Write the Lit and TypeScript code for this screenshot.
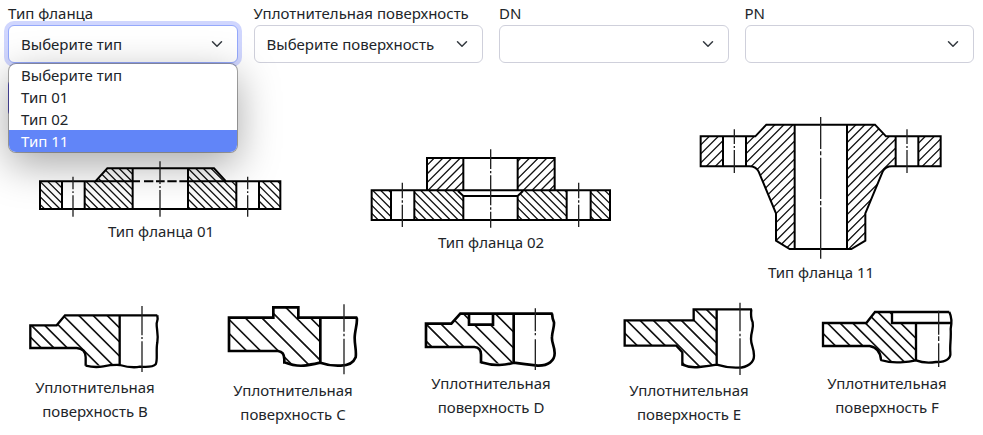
import { LitElement, html, svg, css } from "lit";
import { customElement, property, state } from "lit/decorators.js";
import { classMap } from "lit/directives/class-map.js";

interface Hatch {
  area: string;
  rising?: boolean;
  offsets: number[];
}

interface Drawing {
  id: string;
  title: string;
  box: [number, number, number, number];
  outline: string;
  axis: string;
  weight?: string;
  hatches: Hatch[];
}

const series = (from: number, to: number, step: number): number[] => {
  const out: number[] = [];
  for (let v = from; v <= to; v += step) out.push(v);
  return out;
};

const flanges: Drawing[] = [
  {
    id: "t01",
    title: "Тип фланца 01",
    box: [34, 27, 750, 180],
    outline:
      "M46 94H212L248 55H568L604 94H767V177H46Z M112 94V177 M180 94V177 M324 55V177 M490 55V177 M635 94V177 M703 94V177 M212 94H346 M358 94H386 M394 94H420 M428 94H456 M464 94H604",
    axis: "M145 80V118 M145 124V129 M145 136V200 M406 34V102 M406 108V114 M406 120V200 M669 80V118 M669 124V129 M669 136V200",
    hatches: [
      {
        area: "M46 94H112V177H46Z M180 94H212L248 55H324V177H180Z M490 55H568L604 94H635V177H490Z M703 94H767V177H703Z",
        offsets: series(-688, 140, 23),
      },
    ],
  },
  {
    id: "t02",
    title: "Тип фланца 02",
    box: [20, 9, 750, 246],
    outline:
      "M37 136H752V225H37Z M203 136V39H586V136 M95 136V225 M165 136V225 M312 39V136 M475 39V136 M312 153V225 M475 153V225 M296 138L312 153H475L491 138 M622 136V225 M694 136V225",
    axis: "M129 113V160 M129 166V173 M129 179V246 M394 13V72 M394 78V85 M394 91V181 M394 187V194 M394 200V248 M658 113V160 M658 166V173 M658 179V246",
    hatches: [
      {
        area: "M203 39H312V136H203Z M475 39H586V136H475Z",
        rising: true,
        offsets: series(264, 720, 26),
      },
      {
        area: "M37 136H95V225H37Z M165 136H296L312 153V225H165Z M475 153L491 136H622V225H475Z M694 136H752V225H694Z",
        offsets: series(-600, 180, 24),
      },
    ],
  },
  {
    id: "t11",
    title: "Тип фланца 11",
    box: [20, 36, 750, 429],
    outline:
      "M34 94H198L231 59H557L590 94H754V184H608Q588 184 580 200L528 325V407L486 432H301L260 407V325L208 200Q200 184 180 184H34Z M101 94V184 M170 94V184 M316 59V432 M473 59V432 M619 94V184 M687 94V184",
    axis: "M135 73V117 M135 123V129 M135 135V204 M394 36V132 M394 139V151 M394 158V282 M394 288V301 M394 307V461 M653 73V117 M653 123V129 M653 135V204",
    hatches: [
      {
        area: "M34 94H101V184H34Z M170 94H198L231 59H316V432H301L260 407V325L208 200Q200 184 180 184H170Z M473 59H557L590 94H619V184H608Q588 184 580 200L528 325V407L486 432H473Z M687 94H754V184H687Z",
        rising: true,
        offsets: series(154, 950, 27),
      },
    ],
  },
];

const surfaces: Drawing[] = [
  {
    id: "sb",
    title: "Уплотнительная поверхность B",
    box: [15, 27, 420, 216],
    outline:
      "M412 64H135L110 94H31V162H170Q197 164 197 190V215 M299 64V217 M197 215Q225 222 250 217T299 213Q335 223 360 218C384 220 400 219 407 211C414 200 407 170 412 145C416 120 409 105 410 88Q415 75 412 64",
    axis: "M366 36V124 M366 129V135 M366 142V234",
    weight: "medium",
    hatches: [
      {
        area: "M31 94H110L135 64H299V215H197V190Q197 164 170 162H31Z",
        offsets: [98, 60, 20, -22, -65, -112, -155, -197],
      },
    ],
  },
  {
    id: "sc",
    title: "Уплотнительная поверхность C",
    box: [25, 18, 420, 234],
    outline:
      "M428 71H251V40H176V71H43V171H190Q209 173 209 196V209 M317 71V209 M209 205Q245 219 275 214T317 206Q345 216 375 215C405 216 417 205 423 190C426 170 420 155 420 132C420 110 430 85 426 71",
    axis: "M388 31V113 M388 119V127 M388 134V241",
    weight: "bold",
    hatches: [
      {
        area: "M43 71H176V40H251V71H317V207L275 214L209 207V196Q209 173 190 171H43Z",
        offsets: [75, 33, -20, -70, -118, -173, -216],
      },
    ],
  },
  {
    id: "sd",
    title: "Уплотнительная поверхность D",
    box: [20, 39, 420, 192],
    outline:
      "M415 59H138L111 89H35V159H180Q200 160 200 182V208 M164 59V92H236V59 M298 59V209 M200 205Q230 214 255 213T298 206Q330 211 370 215C402 216 421 200 421 178C421 155 411 147 413 128C414 110 420 100 419 85Q414 74 413 59",
    axis: "M363 43V112 M363 117V124 M363 136V228",
    weight: "bold",
    hatches: [
      {
        area: "M35 89H111L138 59H164V92H236V59H298V209H200V182Q200 160 180 159H35Z",
        offsets: [106, 55, 10, -42, -88, -136, -184],
      },
    ],
  },
  {
    id: "se",
    title: "Уплотнительная поверхность E",
    box: [14, 18, 420, 234],
    outline:
      "M413 46H238V79H31V155H186L204 175V215 M307 46V215 M204 212Q225 222 255 219T307 212Q340 222 370 221C400 222 419 205 419 185C419 160 410 155 410 135C410 110 419 105 415 85Q408 70 411 46",
    axis: "M377 26V112 M377 119V127 M377 133V243",
    weight: "medium",
    hatches: [
      {
        area: "M31 79H238V46H307V213L255 219L204 213V175L186 155H31Z",
        offsets: [86, 42, 2, -38, -80, -122, -160, -196, -230],
      },
    ],
  },
  {
    id: "sf",
    title: "Уплотнительная поверхность F",
    box: [18, 39, 420, 192],
    outline:
      "M415 54H192L166 87H36V156H176Q208 162 210 198 M243 54V87H421 M315 87V202 M208 198Q240 207 268 205T315 199Q340 209 375 204C408 205 420 192 418 175C416 155 421 130 419 105Q425 75 415 54",
    axis: "M383 50V122 M383 127V141 M383 148V219",
    weight: "medium",
    hatches: [
      {
        area: "M36 87H166L192 54H243V87H315V200L268 205L210 198Q208 162 176 156H36Z",
        offsets: [82, 38, 0, -38, -76, -112, -146, -182],
      },
    ],
  },
];

/** Section drawing of a flange with its caption. */
@customElement("section-figure")
export class SectionFigure extends LitElement {
  @property({ attribute: false }) drawing!: Drawing;

  static styles = css`
    :host {
      display: block;
    }
    .figure {
      display: flex;
      flex-direction: column;
      align-items: center;
      margin: 0;
    }
    .art {
      display: block;
      max-width: 100%;
    }
    .caption {
      max-width: 160px;
      line-height: 24px;
      text-align: center;
    }
    .outline,
    .axis,
    .hatch {
      fill: none;
      stroke: #000;
    }
    .outline {
      stroke-width: 6;
    }
    .medium {
      stroke-width: 7;
    }
    .bold {
      stroke-width: 8;
    }
    .axis {
      stroke: #222;
      stroke-width: 4;
    }
    .hatch {
      stroke: #111;
      stroke-width: 4;
    }
    .hatch.medium,
    .hatch.bold {
      stroke-width: 5;
    }
  `;

  private lines(h: Hatch): string {
    return h.offsets
      .map((c) => (h.rising ? `M0 ${c}L800 ${c - 800}` : `M0 ${c}L800 ${c + 800}`))
      .join("");
  }

  render() {
    const d = this.drawing;
    const [, , w, h] = d.box;
    const weight = d.weight ?? "";
    return html`
      <figure class="figure">
        <svg class="art" width=${w / 3} height=${h / 3} viewBox=${d.box.join(" ")} aria-hidden="true">
          ${d.hatches.map(
            (x, i) => svg`
              <clipPath id=${d.id + i}><path d=${x.area}></path></clipPath>
              <g clip-path=${`url(#${d.id + i})`}><path class="hatch ${weight}" d=${this.lines(x)}></path></g>
            `
          )}
          <path class="outline ${weight}" d=${d.outline}></path>
          <path class="axis" d=${d.axis}></path>
        </svg>
        <figcaption class="caption">${d.title}</figcaption>
      </figure>
    `;
  }
}

@customElement("app-root")
export class AppRoot extends LitElement {
  @state() private open = true;
  @state() private active = 3;
  @state() private chosen = 0;

  private types = ["Выберите тип", "Тип 01", "Тип 02", "Тип 11"];

  private fields = [
    { id: "type", label: "Тип фланца", options: this.types },
    { id: "surface", label: "Уплотнительная поверхность", options: ["Выберите поверхность"] },
    { id: "dn", label: "DN", options: [""] },
    { id: "pn", label: "PN", options: [""] },
  ];

  static styles = css`
    :host {
      display: block;
      overflow: hidden;
      padding: 1px 9px 8px 8px;
      background: #fff;
      color: #212529;
      font: 15px/24px "Noto Sans", "Open Sans", sans-serif;
    }
    .fields {
      display: grid;
      grid-template-columns: repeat(4, 1fr);
      gap: 16px;
      margin-bottom: 16px;
    }
    .field {
      position: relative;
      min-width: 0;
    }
    .label {
      display: block;
      white-space: nowrap;
    }
    .control {
      display: grid;
      align-items: center;
    }
    .select {
      grid-area: 1 / 1;
      appearance: none;
      box-sizing: border-box;
      width: 100%;
      height: 38px;
      padding: 0 36px 0 12px;
      border: 1px solid #cfd0db;
      border-radius: 6px;
      outline: 0;
      background: #fff;
      color: inherit;
      font: inherit;
    }
    .select.focused {
      border-color: #95a9fb;
      box-shadow: 0 0 0 4px #d0d6fe;
    }
    .chevron {
      grid-area: 1 / 1;
      justify-self: end;
      margin-right: 13px;
      pointer-events: none;
      fill: none;
      stroke: #343a40;
      stroke-width: 2;
      stroke-linecap: round;
      stroke-linejoin: round;
    }
    .menu {
      position: absolute;
      z-index: 10;
      top: 100%;
      left: 0;
      right: 0;
      margin: 0;
      padding: 0;
      overflow: hidden;
      list-style: none;
      border: 1px solid rgba(0, 0, 0, 0.32);
      border-radius: 8px;
      background: #fff;
      background-clip: padding-box;
      box-shadow: 0 12px 40px rgba(0, 0, 0, 0.34);
      line-height: 22px;
    }
    .option {
      padding: 0 12px;
    }
    .option.active {
      background: #6185f8;
      color: #fff;
    }
    .submit {
      display: block;
      width: 120px;
      height: 38px;
      border: 0;
      border-radius: 6px;
      background: #6f6af0;
    }
    .row {
      display: grid;
      align-items: center;
      margin: 0 -12px;
    }
    .three {
      grid-template-columns: repeat(3, 1fr);
    }
    .five {
      grid-template-columns: repeat(5, 1fr);
      margin-top: 16px;
    }
  `;

  private pick(i: number) {
    this.chosen = i;
    this.open = false;
  }

  render() {
    return html`
      <form class="form" @submit=${(e: Event) => e.preventDefault()}>
        <div class="fields">
          ${this.fields.map(
            (f, n) => html`
              <div class="field">
                <label class="label" for=${f.id}>${f.label}</label>
                <div class="control">
                  <select id=${f.id} class=${classMap({ select: true, focused: n === 0 && this.open })}>
                    ${f.options.map(
                      (o, i) => html`<option ?selected=${i === (n === 0 ? this.chosen : 0)}>${o}</option>`
                    )}
                  </select>
                  <svg class="chevron" width="16" height="12" viewBox="0 0 16 16" aria-hidden="true">
                    <path d="m2 5 6 6 6-6"></path>
                  </svg>
                </div>
                ${n === 0 && this.open
                  ? html`<ul class="menu" role="listbox" aria-label=${f.label}>
                      ${this.types.map(
                        (t, i) => html`<li
                          class=${classMap({ option: true, active: i === this.active })}
                          role="option"
                          aria-selected=${i === this.chosen ? "true" : "false"}
                          @mouseenter=${() => (this.active = i)}
                          @click=${() => this.pick(i)}
                        >${t}</li>`
                      )}
                    </ul>`
                  : null}
              </div>
            `
          )}
        </div>
        <button class="submit" type="submit" aria-label="Показать"></button>
      </form>
      <div class="row three">
        ${flanges.map((d) => html`<section-figure .drawing=${d}></section-figure>`)}
      </div>
      <div class="row five">
        ${surfaces.map((d) => html`<section-figure .drawing=${d}></section-figure>`)}
      </div>
    `;
  }
}
